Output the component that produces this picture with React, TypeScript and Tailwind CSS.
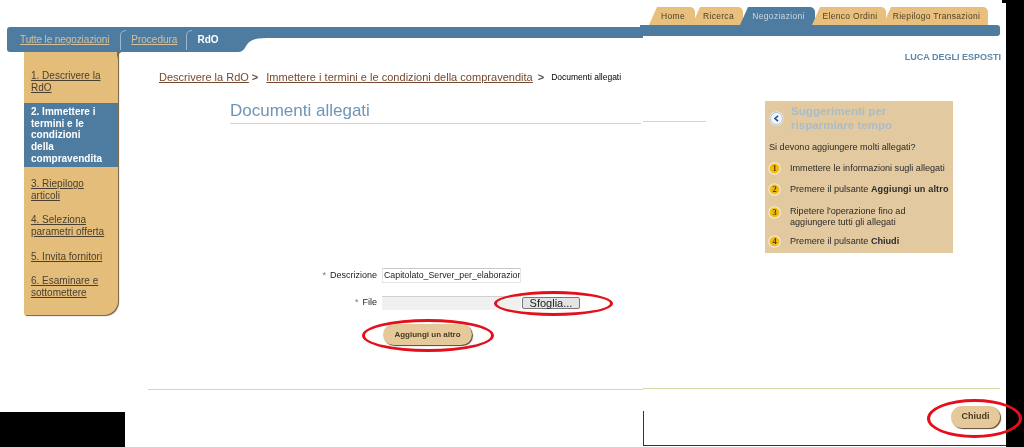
const steps = [
  { lines: ["1. Descrivere la", "RdO"], gap: "mt-[18px]" },
  { lines: ["2. Immettere i", "termini e le", "condizioni", "della", "compravendita"], active: true, gap: "mt-[10px]" },
  { lines: ["3. Riepilogo", "articoli"], gap: "mt-[11px]" },
  { lines: ["4. Seleziona", "parametri offerta"], gap: "mt-[13px]" },
  { lines: ["5. Invita fornitori"], gap: "mt-[13px]" },
  { lines: ["6. Esaminare e", "sottomettere"], gap: "mt-[13px]" },
];

const tabs = [
  { label: "Home", width: "w-[46px]" },
  { label: "Ricerca", width: "w-[51px]" },
  { label: "Negoziazioni", width: "w-[75px]", active: true },
  { label: "Elenco Ordini", width: "w-[74px]" },
  { label: "Riepilogo Transazioni", width: "w-[105px]" },
];

function Badge({ n }: { n: number }) {
  return (
    <svg width="13" height="13" viewBox="0 0 13 13" className="shrink-0">
      <circle cx="6.5" cy="6.5" r="6.2" fill="#f4ead6" />
      <circle cx="6.5" cy="6.5" r="5" fill="#eebc12" />
      <text x="6.5" y="9.4" textAnchor="middle" fontSize="8.5" fontWeight="700" fill="#5a4208" fontFamily="Liberation Serif, serif">
        {n}
      </text>
    </svg>
  );
}

function Hint() {
  return (
    <div className="ml-[59px] h-[152px] w-[188px] bg-[#e3c99f] text-[9.1px] leading-[11px] text-[#2b2b2b]">
      <div className="flex items-center pl-[4px] pt-[3px]">
        <svg width="15" height="15" viewBox="0 0 15 15" className="shrink-0">
          <circle cx="7.5" cy="7.5" r="7" fill="#f3f5f8" />
          <circle cx="7.5" cy="7.5" r="6" fill="none" stroke="#a9c3dc" strokeWidth="1" />
          <path d="M9 4.8 L6 7.5 L9 10.2" fill="none" stroke="#2c4f7c" strokeWidth="1.6" />
        </svg>
        <div className="ml-[7px] text-[11.6px] font-bold leading-[14px] text-[#a9bccb]">
          Suggerimenti per
          <br />
          risparmiare tempo
        </div>
      </div>
      <div className="ml-[4px] mt-[10px]">Si devono aggiungere molti allegati?</div>
      <div className="ml-[3px] mt-[9px] flex items-center gap-[9px]">
        <Badge n={1} />
        <span>Immettere le informazioni sugli allegati</span>
      </div>
      <div className="ml-[3px] mt-[8px] flex items-center gap-[9px]">
        <Badge n={2} />
        <span>
          Premere il pulsante <b className="tracking-[0.15px]">Aggiungi un altro</b>
        </span>
      </div>
      <div className="ml-[3px] mt-[10px] flex items-start gap-[9px]">
        <Badge n={3} />
        <span>
          Ripetere l'operazione fino ad
          <br />
          aggiungere tutti gli allegati
        </span>
      </div>
      <div className="ml-[3px] mt-[7px] flex items-center gap-[9px]">
        <Badge n={4} />
        <span>
          Premere il pulsante <b>Chiudi</b>
        </span>
      </div>
    </div>
  );
}

export default function App() {
  return (
    <div className="relative flex h-[447px] w-[1024px] overflow-hidden bg-black font-['Liberation_Sans',Arial,sans-serif] blur-[0.4px]">
      <div className="flex w-[1006px] bg-white">
        {/* left half of the collage */}
        <div className="w-[643px] pt-[27px]">
          <div className="ml-[7px] flex h-[25px]">
            <div className="flex w-[230px] items-center whitespace-nowrap rounded-l-[3px] bg-[#4e7ca1] pl-[13px] text-[10px]">
              <span className="tracking-[-0.1px] text-[#d3c19c] underline">Tutte le negoziazioni</span>
              <svg width="9" height="20" viewBox="0 0 9 20" className="ml-[11px] shrink-0">
                <path d="M0.5 20 V5 Q0.5 1 6 0.5" fill="none" stroke="#9fb6c8" />
              </svg>
              <span className="ml-[2px] text-[#d3c19c] underline">Procedura</span>
              <svg width="9" height="20" viewBox="0 0 9 20" className="ml-[9px] shrink-0">
                <path d="M0.5 20 V5 Q0.5 1 6 0.5" fill="none" stroke="#9fb6c8" />
              </svg>
              <span className="ml-[2px] text-[10px] font-bold text-white">RdO</span>
            </div>
            <svg width="30" height="25" viewBox="0 0 30 25" className="shrink-0">
              <path d="M0 0 H30 V11 C18 11 13 13 9 19 C7 23 5 25 0 25 Z" fill="#4e7ca1" />
            </svg>
            <div className="h-[11px] flex-1 bg-[#4e7ca1]" />
          </div>

          <div className="flex">
            <div className="relative ml-[24px] h-[263px] w-[94px] rounded-br-[14px] rounded-bl-[2px] bg-[#e5bd7b] text-[10px] leading-[11.7px] shadow-[1px_1px_1px_#6f5c3c]">
              <svg width="5" height="9" viewBox="0 0 5 9" className="absolute -right-[4px] top-0">
                <path d="M0 9 Q0 2 4.5 0 H0 Z" fill="#7a6a50" />
              </svg>
              {steps.map((step) => (
                <div
                  key={step.lines[0]}
                  className={
                    step.active
                      ? `${step.gap} bg-[#4e7ca1] py-[2.5px] pl-[7px] font-bold text-white`
                      : `${step.gap} pl-[7px] text-[#4b4030] underline`
                  }
                >
                  {step.lines.map((line) => (
                    <div key={line} className="whitespace-nowrap">
                      {line}
                    </div>
                  ))}
                </div>
              ))}
            </div>

            <div className="flex-1 pl-px pt-px">
              <div className="mt-[18px] flex h-[12px] items-center whitespace-nowrap pl-[40px] text-[11px] text-[#75492f]">
                <span className="underline">Descrivere la RdO</span>
                <span className="ml-[3px] font-bold text-[#555]">&gt;</span>
                <span className="ml-[8px] tracking-[0.02px] underline">Immettere i termini e le condizioni della compravendita</span>
                <span className="ml-[5px] font-bold text-[#555]">&gt;</span>
                <span className="ml-[7px] text-[8.5px] text-black">Documenti allegati</span>
              </div>

              <div className="ml-[111px] mr-[2px] mt-[17px] h-[24px] border-b border-[#d8d8a8] text-[17px] leading-[22px] text-[#6f94b4]">
                Documenti allegati
              </div>

              <div className="mt-[144px] text-[9px] text-[#222]">
                <div className="flex h-[15px] items-center">
                  <div className="w-[258px] text-right">
                    <span className="mr-[4px] text-[#5b7fa6]">*</span>Descrizione
                  </div>
                  <div className="ml-[5px] flex h-[15px] w-[139px] items-center overflow-hidden whitespace-nowrap border border-[#e6e6e6] border-t-[#c8c8c8] pl-px text-[8.8px]">
                    Capitolato_Server_per_elaborazioni
                  </div>
                </div>
                <div className="mt-[13px] flex h-[14px] items-center">
                  <div className="w-[258px] text-right">
                    <span className="mr-[4px] text-[#5b7fa6]">*</span>File
                  </div>
                  <div className="ml-[5px] h-[14px] w-[139px] border-t border-[#d0d0d0] bg-[#f0f0f0]" />
                  <div className="ml-[1px] flex h-[12px] w-[58px] items-center justify-center rounded-[2px] border border-[#777] bg-[#e4e4e4] text-[11px] text-[#222]">
                    Sfoglia...
                  </div>
                </div>
                <div className="ml-[264px] mt-[14px] flex h-[21px] w-[89px] items-center justify-center rounded-full bg-[#e5c99b] text-[8px] font-bold text-[#4a3a20] shadow-[1px_1px_1px_#5b4526]">
                  Aggiungi un altro
                </div>
              </div>

              <div className="ml-[29px] mt-[44px] border-t border-[#d8d8a8]" />
            </div>
          </div>
        </div>

        {/* right half, pasted from another capture */}
        <div className="flex w-[363px] flex-col pt-[7px]">
          <div className="ml-[6px] flex h-[18px]">
            {tabs.map((tab) => (
              <div
                key={tab.label}
                className={`${tab.width} -mr-[3px] flex shrink-0 items-center justify-center whitespace-nowrap rounded-tr-[5px] pl-[2px] text-[8.5px] tracking-[0.3px] [clip-path:polygon(0_100%,8px_0,100%_0,100%_100%)] ${
                  tab.active ? "bg-[#4e7ca1] text-[#c9d6e0]" : "bg-[#e8bf7c] text-[#4f3f26]"
                }`}
              >
                {tab.label}
              </div>
            ))}
          </div>
          <div className="-ml-[3px] mr-[6px] h-[11px] rounded-r-[3px] bg-[#4e7ca1]" />

          <div className="mr-[5px] mt-[15px] h-[12px] text-right text-[9px] font-bold leading-[12px] text-[#5f87a8]">
            LUCA DEGLI ESPOSTI
          </div>

          <div className="mt-[38px] flex">
            <div className="mt-[20px] h-px w-[63px] bg-[#d8d8a8]" />
            <Hint />
          </div>

          <div className="mr-[6px] mt-[135px] border-t border-[#d8d8a8]" />

          <div className="mr-[6px] mt-[17px] flex h-[22px] w-[49px] items-center justify-center self-end rounded-full bg-[#e5c99b] text-[9px] font-bold text-[#4a3a20] shadow-[1px_1px_1px_#5b4526]">
            Chiudi
          </div>
        </div>
      </div>

      {/* black leftovers of the pasted captures */}
      <div className="absolute left-0 top-[412px] h-[35px] w-[125px] bg-black" />
      <div className="absolute left-[1002px] top-0 h-[3px] w-[6px] bg-black" />
      <div className="absolute left-[643px] top-[411px] h-[35px] w-[363px] border-b border-l border-[#333]" />

      {/* red hand-drawn ovals */}
      <div className="absolute left-[494px] top-[291px] h-[25px] w-[119px] rounded-[50%] border-[3px] border-[#e3101c]" />
      <div className="absolute left-[362px] top-[319px] h-[33px] w-[132px] rounded-[50%] border-[3px] border-[#e3101c]" />
      <div className="absolute left-[927px] top-[399px] h-[39px] w-[95px] rounded-[50%] border-[3px] border-[#e3101c]" />
    </div>
  );
}
